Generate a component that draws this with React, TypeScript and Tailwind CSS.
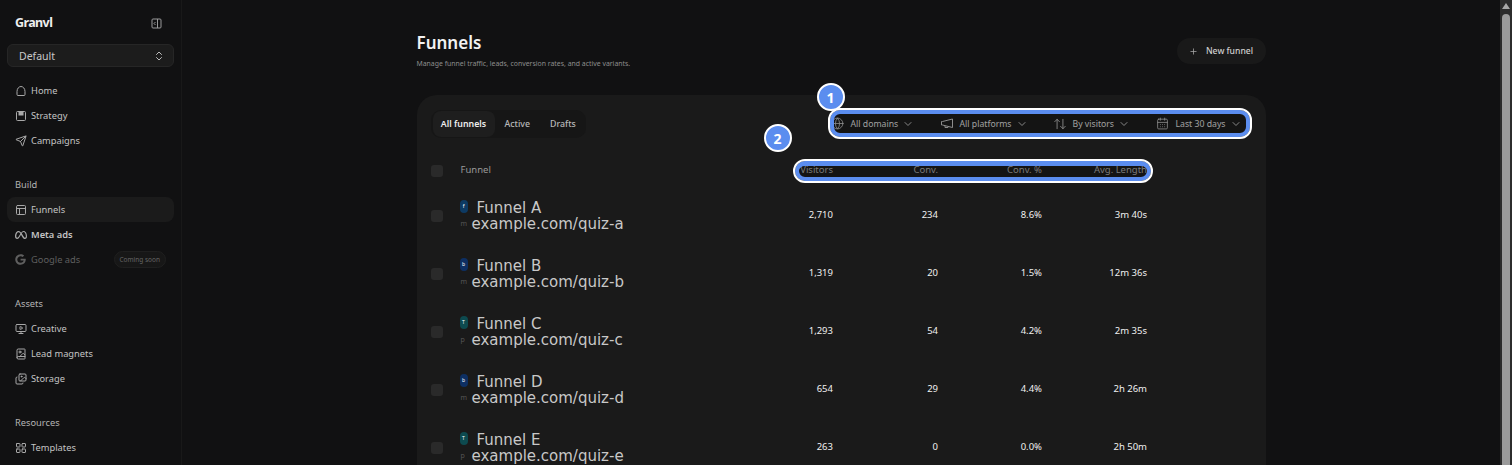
import { Send, ChevronDown, ChevronsUpDown, Plus, Globe, ArrowUpDown, CalendarDays, LayoutGrid, BookImage, Images, MonitorPlay, PanelsTopLeft } from 'lucide-react';
import { FaMeta, FaGoogle } from 'react-icons/fa6';

const noto = { fontFamily: '"Noto Sans", sans-serif' };

const funnels = [
  { name: 'Funnel A', url: 'example.com/quiz-a', tag: 'f', sub: 'm', color: 'bg-[#0d3a63]', visitors: '2,710', conv: '234', pct: '8.6%', len: '3m 40s' },
  { name: 'Funnel B', url: 'example.com/quiz-b', tag: 'b', sub: 'm', color: 'bg-[#0d2f63]', visitors: '1,319', conv: '20', pct: '1.5%', len: '12m 36s' },
  { name: 'Funnel C', url: 'example.com/quiz-c', tag: 'T', sub: 'p', color: 'bg-[#0d4a4f]', visitors: '1,293', conv: '54', pct: '4.2%', len: '2m 35s' },
  { name: 'Funnel D', url: 'example.com/quiz-d', tag: 'b', sub: 'm', color: 'bg-[#0d2f63]', visitors: '654', conv: '29', pct: '4.4%', len: '2h 26m' },
  { name: 'Funnel E', url: 'example.com/quiz-e', tag: 'T', sub: 'p', color: 'bg-[#0d4a4f]', visitors: '263', conv: '0', pct: '0.0%', len: '2h 50m' },
];

function HomeIcon() {
  return (
    <svg width="12" height="12" viewBox="0 0 12 12" fill="none" stroke="currentColor">
      <path d="M2 6.5C2 3.5 4 1.5 6 1.5s4 2 4 5v3a1 1 0 0 1-1 1H3a1 1 0 0 1-1-1z" />
    </svg>
  );
}

function StrategyIcon() {
  return (
    <svg width="12" height="12" viewBox="0 0 12 12" fill="none">
      <rect x="1.5" y="1.5" width="9" height="9" rx="1" stroke="currentColor" />
      <rect x="3.5" y="1.5" width="5" height="4" fill="currentColor" />
    </svg>
  );
}

function CollapseIcon() {
  return (
    <svg width="11" height="11" viewBox="0 0 11 11" fill="none" stroke="currentColor" className="text-[#9a9a9a]">
      <rect x="1" y="1" width="9" height="9" rx="1" />
      <path d="M6.5 1v9M4.5 4 3 5.5 4.5 7" />
    </svg>
  );
}

function HornIcon() {
  return (
    <svg width="14" height="13" viewBox="0 0 14 13" fill="none" stroke="currentColor">
      <path d="M1.5 4.5h1L12.5 2v8.5L2.5 8h-1z" />
      <path d="M5 8.8v1.7h3v-.9" />
    </svg>
  );
}

function NavRow({ icon, label, active, muted, bold }: { icon: React.ReactNode; label: string; active?: boolean; muted?: boolean; bold?: boolean }) {
  return (
    <div className={`h-[25px] flex items-center gap-[4px] pl-[7px] rounded-lg text-[9.3px] ${active ? 'bg-[#1b1b1b]' : ''} ${muted ? 'text-[#5f5f5f]' : 'text-[#c4c4c4]'} ${bold ? 'font-semibold' : ''}`}>
      <span className={`w-[13px] flex justify-center shrink-0 ${muted ? 'text-[#5f5f5f]' : 'text-[#a8a8a8]'}`}>{icon}</span>
      <span>{label}</span>
      {muted && <span className="ml-auto mr-[8px] h-[17px] px-[5px] flex items-center rounded-full bg-[#171717] border border-[#1f1f1f] text-[6.5px] text-[#666]">Coming soon</span>}
    </div>
  );
}

function SectionLabel({ children }: { children: string }) {
  return <div className="h-[25px] mt-[19px] flex items-center pl-[8px] text-[9.3px] text-[#b4b4b4]">{children}</div>;
}

function Sidebar() {
  const ic = 'w-[12px] h-[12px]';
  return (
    <aside className="w-[182px] shrink-0 border-r border-[#191919] px-[7px] h-full overflow-hidden" style={noto}>
      <div className="h-[44px] flex items-center justify-between pl-[8px] pr-[12px] pt-[3px]">
        <span className="text-[12.5px] font-bold tracking-[-0.6px] text-[#eee]">Granvl</span>
        <CollapseIcon />
      </div>
      <div className="h-[23px] flex items-center justify-between pl-[11px] pr-[8px] rounded-md bg-[#1c1c1c] border border-[#262626] text-[10.5px] text-[#c8c8c8]">
        <span className="pt-[2px]">Default</span>
        <ChevronsUpDown className="w-[12px] h-[12px] text-[#bbb]" />
      </div>
      <div className="mt-[11px]">
        <NavRow icon={<HomeIcon />} label="Home" />
        <NavRow icon={<StrategyIcon />} label="Strategy" />
        <NavRow icon={<Send className={ic} />} label="Campaigns" />
        <SectionLabel>Build</SectionLabel>
        <NavRow icon={<PanelsTopLeft className={ic} />} label="Funnels" active />
        <NavRow icon={<FaMeta className="w-[12px] h-[12px]" />} label="Meta ads" bold />
        <NavRow icon={<FaGoogle className="w-[11px] h-[11px]" />} label="Google ads" muted />
        <SectionLabel>Assets</SectionLabel>
        <NavRow icon={<MonitorPlay className={ic} />} label="Creative" />
        <NavRow icon={<BookImage className={ic} />} label="Lead magnets" />
        <NavRow icon={<Images className={ic} />} label="Storage" />
        <SectionLabel>Resources</SectionLabel>
        <NavRow icon={<LayoutGrid className={ic} />} label="Templates" />
      </div>
    </aside>
  );
}

function Filter({ icon, label, width }: { icon: React.ReactNode; label: string; width: string }) {
  return (
    <div className={`flex items-center ${width}`}>
      <span className="w-[14px] flex justify-center text-[#b0b0b0]">{icon}</span>
      <span className="ml-[6px] mr-[4px] pt-[1px] whitespace-nowrap">{label}</span>
      <ChevronDown className="w-[12px] h-[12px] text-[#a8a8a8]" />
    </div>
  );
}

function Badge({ n, className }: { n: string; className: string }) {
  return (
    <div className={`absolute w-[28px] h-[28px] rounded-full bg-[#5b8def] border-2 border-white flex items-center justify-center text-white text-[14px] font-bold ${className}`}>{n}</div>
  );
}

function FunnelRow({ f }: { f: (typeof funnels)[number] }) {
  return (
    <div className="grid grid-cols-[30px_267.5px_105px_105px_104px_105px] items-center h-[58px] text-[9.5px] text-[#f0f0f0] text-right">
      <div className="w-[12px] h-[12px] rounded-[3px] bg-[#2a2a2a] mt-[2px]" />
      <div className="text-left flex mt-[2px]">
        <div className="w-[12px] shrink-0 flex flex-col items-start ml-[-1px]">
          <span className={`w-[8px] h-[13px] rounded-[4px] ${f.color} text-[5px] leading-[12px] text-white text-center`}>{f.tag}</span>
          <span className="mt-[7px] text-[7px] leading-[8px] text-[#555] pl-[1px]">{f.sub}</span>
        </div>
        <div className="text-[#c8c8c8] text-[15px] leading-[16px]" style={{ fontFamily: '"DejaVu Sans", sans-serif' }}>
          <div className="pl-[5px]">{f.name}</div>
          <div>{f.url}</div>
        </div>
      </div>
      <div>{f.visitors}</div>
      <div>{f.conv}</div>
      <div>{f.pct}</div>
      <div>{f.len}</div>
    </div>
  );
}

export default function App() {
  return (
    <div className="h-[465px] w-[1512px] flex overflow-hidden bg-[#111112]">
      <Sidebar />
      <main className="flex-1 h-full overflow-hidden" style={noto}>
        <div className="relative mx-auto w-[849px] pt-[34px]">
          <div className="flex items-start justify-between h-[61px]">
            <div>
              <h1 className="text-[17px] leading-[18px] font-semibold text-[#f2f2f2]">Funnels</h1>
              <p className="mt-[7px] text-[6.9px] leading-[10px] text-[#8d8d8d]">Manage funnel traffic, leads, conversion rates, and active variants.</p>
            </div>
            <button className="mt-[4px] h-[26px] w-[89px] flex items-center justify-center gap-[8px] rounded-[13px] bg-[#191919] text-[8.6px] font-medium text-[#cfcfcf] pt-[1px]">
              <Plus className="w-[9px] h-[9px] text-[#aaa]" />
              New funnel
            </button>
          </div>
          <section className="rounded-t-[20px] bg-[#1a1a1a] pl-[14px] pt-[15px] h-[400px]">
            <div className="flex items-center justify-between pr-[21px]">
              <div className="flex items-center h-[28px] w-[155px] px-[2px] rounded-[10px] bg-[#161616] text-[8.8px] text-[#b8b8b8] font-medium">
                <span className="h-[26px] w-[62px] pt-[2px] flex items-center justify-center rounded-lg bg-[#1e1e1e] text-[#eee] font-semibold">All funnels</span>
                <span className="ml-[10px] pt-[2px]">Active</span>
                <span className="ml-[20px] pt-[2px]">Drafts</span>
              </div>
              <div className="flex items-center text-[8.7px] text-[#c8c8c8]">
                <Filter icon={<Globe className="w-[13px] h-[13px] stroke-[1.5]" />} label="All domains" width="w-[109px]" />
                <Filter icon={<HornIcon />} label="All platforms" width="w-[113px]" />
                <Filter icon={<ArrowUpDown className="w-[14px] h-[14px] stroke-[1.5]" />} label="By visitors" width="w-[103px]" />
                <Filter icon={<CalendarDays className="w-[13px] h-[13px] stroke-[1.5]" />} label="Last 30 days" width="w-[89px]" />
              </div>
            </div>
            <div className="mt-[22.5px] grid grid-cols-[30px_267.5px_105px_105px_104px_105px] items-center h-[20px] text-[9.5px] text-[#999] text-right">
              <div className="w-[12px] h-[12px] rounded-[3px] bg-[#2a2a2a]" />
              <div className="text-left">Funnel</div>
              <div>Visitors</div>
              <div>Conv.</div>
              <div>Conv. %</div>
              <div>Avg. Length</div>
            </div>
            <div className="mt-[5.5px]">
              {funnels.map(f => <FunnelRow key={f.name} f={f} />)}
            </div>
          </section>

          {/* tutorial callouts drawn on top of the table */}
          <div className="absolute left-[413px] top-[110px] w-[420px] h-[27px] rounded-[10px] border-y-[4.5px] border-x-[4.5px] border-[#5b8def] outline-2 outline-white bg-black/20" />
          <div className="absolute left-[378px] top-[161px] w-[356px] h-[20px] rounded-[10px] border-t-[5px] border-b-[4px] border-x-[4.5px] border-[#5b8def] outline-2 outline-white bg-black/20" />
          <Badge n="1" className="left-[400px] top-[83px]" />
          <Badge n="2" className="left-[347px] top-[124px]" />
        </div>
      </main>
      <div className="w-[12px] h-full shrink-0 bg-[#2c2c2c] flex flex-col items-center pt-[3px]">
        <div className="w-0 h-0 border-x-[4px] border-x-transparent border-b-[6px] border-b-[#a8a8a8]" />
        <div className="mt-[5px] w-[8px] flex-1 rounded-t-[4px] bg-[#9b9b9b]" />
      </div>
    </div>
  );
}
